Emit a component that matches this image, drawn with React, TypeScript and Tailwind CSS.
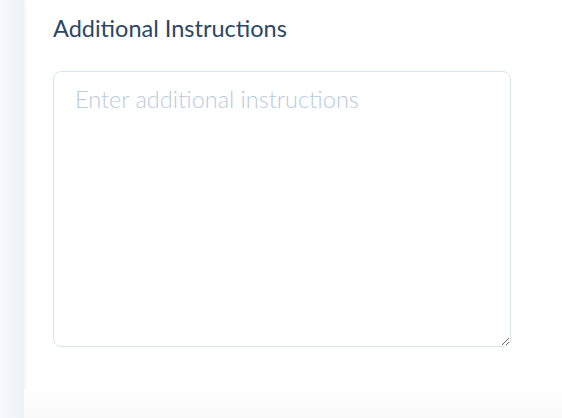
const App = () => {
  return (
    <div className="flex h-[418px] w-[562px] overflow-hidden bg-white" style={{ fontFamily: 'Lato, "Open Sans", sans-serif' }}>
      {/* sidebar edge */}
      <div className="w-[24px] shrink-0 bg-gradient-to-r from-[#f6f9fd] to-[#edf2f8] shadow-[1px_0_3px_rgba(30,60,100,0.08)]"></div>

      <div className="flex flex-1 flex-col">
        <div className="flex-1 pl-[29px] pt-[12px]">
          <h2 className="text-[23.5px] leading-[32px] font-normal text-[#2b4767]">Additional Instructions</h2>
          <textarea
            placeholder="Enter additional instructions"
            className="mt-[27px] block h-[276px] w-[458px] rounded-[8px] border border-[#d9e5f0] bg-white px-[21px] py-[12px] text-[23.5px] leading-[30px] font-light text-[#2b4767] placeholder:text-[#b9cadc] focus:outline-none"
          />
        </div>
        <div className="h-[28px] bg-gradient-to-b from-white to-[#f9f9f9]"></div>
      </div>
    </div>
  );
};

export default App;
